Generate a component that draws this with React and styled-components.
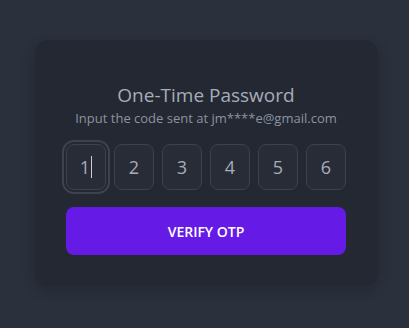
import React from "react";
import styled, { createGlobalStyle } from "styled-components";

const Global = createGlobalStyle`
  html, body { margin: 0; padding: 0; background: #2a303c; }
  body { font-family: "Open Sans", "Noto Sans", sans-serif; color: #a6adbb; }
  * { box-sizing: border-box; }
`;

const Page = styled.div`
  width: 409px;
  height: 328px;
  display: flex;
  justify-content: center;
  padding-top: 40px;
`;

const Card = styled.div`
  width: 343px;
  height: 246px;
  background: #232832;
  border-radius: 14px;
  box-shadow: 0 4px 14px rgba(0, 0, 0, 0.18);
  padding: 42px 32px 30px;
  display: flex;
  flex-direction: column;
  align-items: center;
  margin-left: 3px;
`;

const Title = styled.h1`
  margin: 0;
  font-size: 19px;
  font-weight: 400;
  line-height: 26px;
  color: #a6adbb;
`;

const Subtitle = styled.p`
  margin: 0;
  font-size: 13px;
  line-height: 20px;
  color: #8c93a1;
`;

const Inputs = styled.div`
  display: flex;
  gap: 8px;
  margin-top: 16px;
`;

const Box = styled.div`
  width: 40px;
  height: 46px;
  border: 1px solid #3b4250;
  border-radius: 8px;
  background: #272c37;
  display: flex;
  align-items: center;
  justify-content: center;
  font-size: 18px;
  color: #a6adbb;
  outline: ${(p) => (p.$focus ? "2px solid #3b4250" : "none")};
  outline-offset: 2px;
`;

const Caret = styled.span`
  display: inline-block;
  width: 1px;
  height: 22px;
  background: #c8ceda;
  margin-left: 1px;
`;

const Button = styled.button`
  margin-top: 17px;
  width: 280px;
  height: 48px;
  border: none;
  border-radius: 8px;
  background: #661ae6;
  color: #ffffff;
  font-family: "Open Sans", "Noto Sans", sans-serif;
  font-weight: 600;
  font-size: 14px;
  letter-spacing: 0;
`;

export default function App() {
  const digits = ["1", "2", "3", "4", "5", "6"];
  return (
    <>
      <Global />
      <Page>
        <Card>
          <Title>One-Time Password</Title>
          <Subtitle>Input the code sent at jm****e@gmail.com</Subtitle>
          <Inputs>
            {digits.map((d, i) => (
              <Box key={d} $focus={i === 0}>
                {d}
                {i === 0 && <Caret />}
              </Box>
            ))}
          </Inputs>
          <Button>VERIFY OTP</Button>
        </Card>
      </Page>
    </>
  );
}
